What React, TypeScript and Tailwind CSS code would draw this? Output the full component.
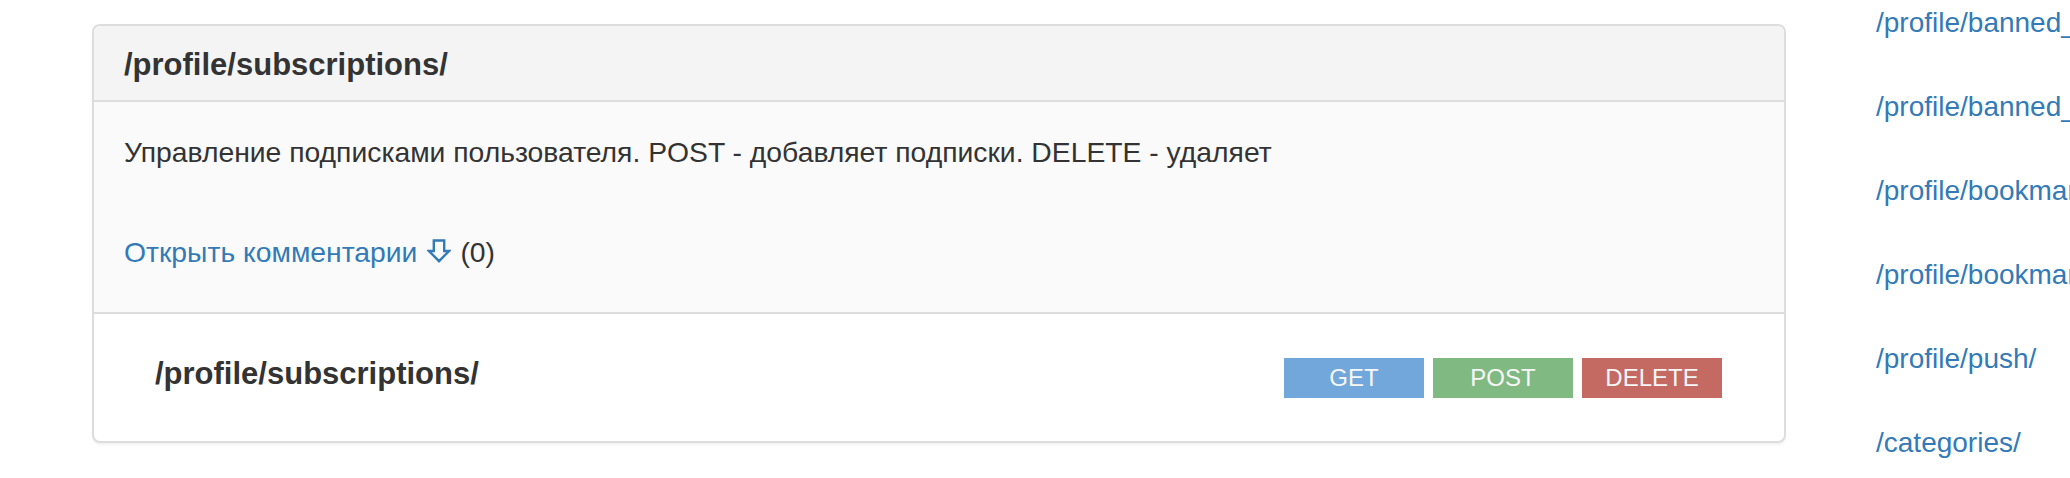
const methods = [
  { name: "GET", cls: "bg-[#72a7dc]" },
  { name: "POST", cls: "bg-[#80ba82]" },
  { name: "DELETE", cls: "bg-[#c46a62]" },
];

const sideLinks = [
  "/profile/banned_users/",
  "/profile/banned_tags/",
  "/profile/bookmarks/",
  "/profile/bookmarks_ids/",
  "/profile/push/",
  "/categories/",
];

function DownArrow() {
  return (
    <svg
      width="24"
      height="24"
      viewBox="0 0 24 24"
      className="inline-block align-[-1px]"
      fill="none"
      stroke="#337ab7"
      strokeWidth="2.4"
      strokeLinejoin="miter"
    >
      <path d="M6.8 1.5 H17.2 V12 H22 L12 22.2 L2 12 H6.8 Z" />
    </svg>
  );
}

export default function App() {
  return (
    <div
      className="flex h-[478px] w-full overflow-hidden bg-white text-[#333]"
      style={{ fontFamily: '"Liberation Sans", Arial, sans-serif' }}
    >
      <div className="ml-[92px] mt-[24px] w-[1694px] shrink-0">
        <div className="overflow-hidden rounded-[8px] border-2 border-[#ddd] bg-white shadow-[0_2px_2px_rgba(0,0,0,0.05)]">
          {/* heading */}
          <div className="border-b-2 border-[#ddd] bg-[#f4f4f4] px-[30px] pt-[22px] pb-[18px]">
            <h3 className="text-[31px] font-bold leading-[34px] text-[#333]">
              /profile/subscriptions/
            </h3>
          </div>

          {/* description */}
          <div className="border-b-2 border-[#ddd] bg-[#fafafa] px-[30px] pt-[30px] pb-[40px] text-[28.3px] leading-[40px]">
            <p>
              Управление подписками пользователя. POST - добавляет подписки.
              DELETE - удаляет
            </p>
            <p className="mt-[60px]">
              <a href="#" className="text-[#337ab7]">
                Открыть комментарии
                <span className="ml-[10px]">
                  <DownArrow />
                </span>
              </a>
              <span className="ml-[9px]">(0)</span>
            </p>
          </div>

          {/* endpoint row */}
          <div className="flex h-[127px] items-center justify-between pl-[61px] pr-[62px]">
            <div className="pb-[7px] text-[31px] font-bold leading-[40px]">
              /profile/subscriptions/
            </div>
            <div className="flex gap-[9px]">
              {methods.map((m) => (
                <span
                  key={m.name}
                  className={`flex h-[40px] w-[140px] items-center justify-center text-[24px] text-[#f7f7f7] ${m.cls}`}
                >
                  {m.name}
                </span>
              ))}
            </div>
          </div>
        </div>
      </div>

      <ul className="ml-[90px] flex shrink-0 flex-col gap-[44px] pt-[3px] text-[28px] leading-[40px]">
        {sideLinks.map((l) => (
          <li key={l}>
            <a href="#" className="whitespace-nowrap text-[#337ab7]">
              {l}
            </a>
          </li>
        ))}
      </ul>
    </div>
  );
}
